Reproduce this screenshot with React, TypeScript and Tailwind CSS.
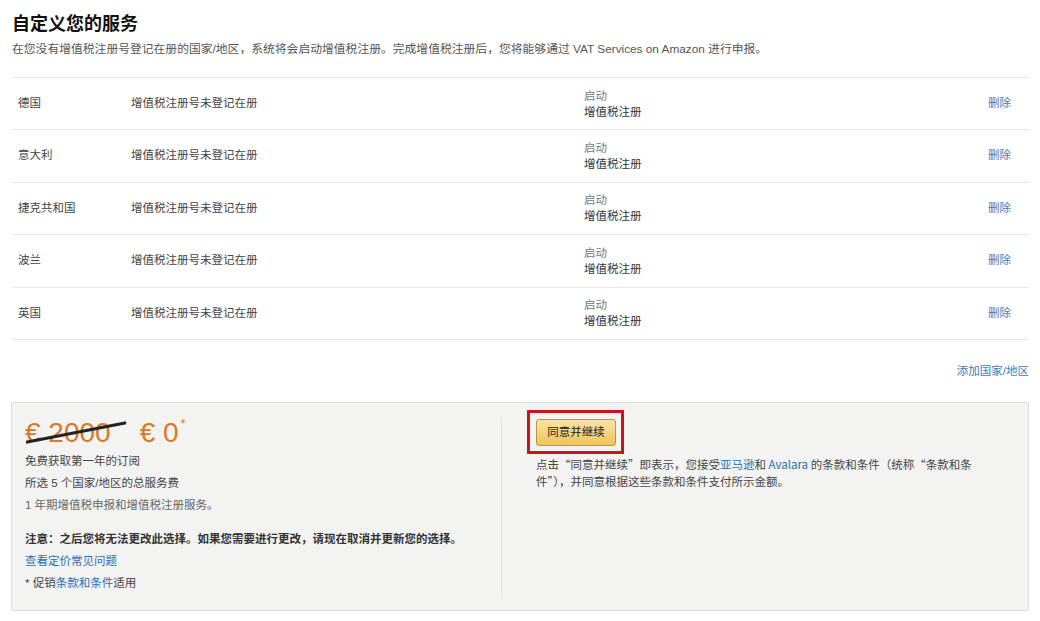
import React from 'react';

const countries = ['德国', '意大利', '捷克共和国', '波兰', '英国'];

const font = { fontFamily: '"Liberation Sans", "Noto Sans CJK SC", sans-serif' };

export default function App() {
  return (
    <div className="w-[1040px] h-[621px] bg-white text-[#333] overflow-hidden" style={font}>
      <div className="pl-[12px] pr-[11px] pt-[11px]">
        <h1 className="text-[18px] leading-[26px] font-bold text-[#111]">自定义您的服务</h1>
        <p className="mt-[5px] text-[11.8px] leading-[14px] text-[#555]">
          在您没有增值税注册号登记在册的国家/地区，系统将会启动增值税注册。完成增值税注册后，您将能够通过 VAT Services on Amazon 进行申报。
        </p>

        {/* 国家列表 */}
        <div className="mt-[21px] border-t border-[#e7e7e7]">
          {countries.map((c) => (
            <div key={c} className="h-[52.4px] border-b border-[#e7e7e7] flex items-center text-[11.5px]">
              <div className="w-[119px] pl-[6px] text-[#444]">{c}</div>
              <div className="w-[453px] text-[#444]">增值税注册号未登记在册</div>
              <div className="flex-1 leading-[16px]">
                <div className="text-[#777]">启动</div>
                <div className="text-[#333]">增值税注册</div>
              </div>
              <a className="pr-[18px] text-[#3a7bbf]">删除</a>
            </div>
          ))}
        </div>

        <div className="flex justify-end mt-[23px] text-[11.5px] text-[#3a7bbf]">
          <a>添加国家/地区</a>
        </div>

        {/* 价格汇总 */}
        <div className="mt-[22px] -ml-[1px] h-[209px] bg-[#f3f3f2] border border-[#dcdcdc] rounded-[2px] flex py-[14px]">
          <div className="w-[490px] border-r border-[#dedede] pl-[13px]">
            <div className="flex items-start h-[31px]">
              <span className="relative text-[28px] leading-[31px] text-[#d9782a]">
                € 2000
                <span className="absolute left-0 w-[102px] top-[14px] h-[2.5px] bg-[#222] -rotate-[11deg]" />
              </span>
              <span className="ml-[29px] text-[28px] leading-[31px] text-[#d9782a]">€ 0</span>
              <span className="ml-[2px] text-[13px] leading-[14px] text-[#d9782a]">*</span>
            </div>
            <div className="mt-[2px] text-[11.5px] leading-[22px] text-[#444]">
              <p>免费获取第一年的订阅</p>
              <p>所选 5 个国家/地区的总服务费</p>
              <p className="text-[#666]">1 年期增值税申报和增值税注册服务。</p>
              <p className="mt-[12px] font-bold text-[#333]">注意：之后您将无法更改此选择。如果您需要进行更改，请现在取消并更新您的选择。</p>
              <p className="text-[#2d6fb5]">查看定价常见问题</p>
              <p>* 促销<span className="text-[#2d6fb5]">条款和条件</span>适用</p>
            </div>
          </div>
          <div className="flex-1 pl-[34px] pt-[2px]">
            <div className="inline-block border-[3px] border-[#c9141b] pl-[6px] pr-[5px] pt-[6px] pb-[5px] -ml-[9px] -mt-[9px]">
              <button className="block h-[27px] w-[80px] text-[11.5px] text-[#222] rounded-[3px] border border-[#b89a3d] bg-gradient-to-b from-[#f8e3a4] to-[#eec45a]">
                同意并继续
              </button>
            </div>
            <p className="mt-[2px] text-[11.5px] leading-[17px] text-[#444] w-[452px] font-['Noto_Sans_CJK_SC']">
              点击“同意并继续”即表示，您接受<span className="text-[#2d6fb5]">亚马逊</span>和 <span className="text-[#2d6fb5]">Avalara</span> 的条款和条件（统称“条款和条件”），并同意根据这些条款和条件支付所示金额。
            </p>
          </div>
        </div>
      </div>
    </div>
  );
}
